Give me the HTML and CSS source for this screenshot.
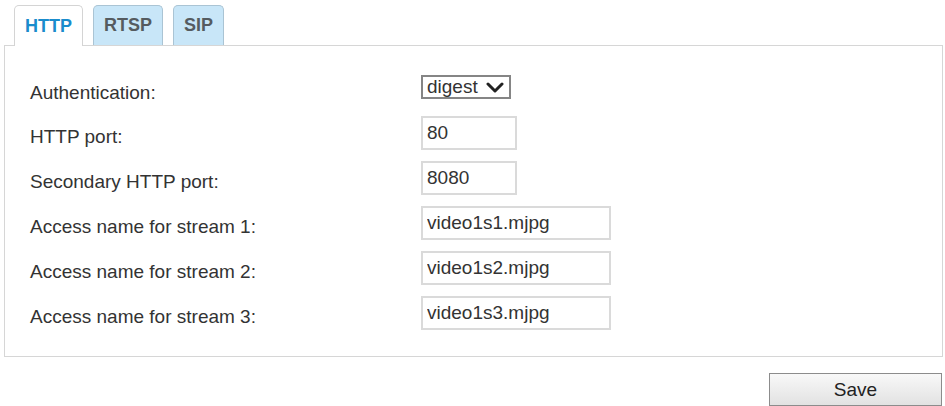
FILE: index.html
```html
<!DOCTYPE html>
<html>
<head>
<meta charset="utf-8">
<link rel="stylesheet" href="styles.css">
</head>
<body>
<div class="page">
  <div class="tabs">
    <div class="tab active">HTTP</div>
    <div class="tab">RTSP</div>
    <div class="tab">SIP</div>
  </div>
  <div class="panel">
    <div class="row row-select">
      <span class="label">Authentication:</span>
      <div class="select"><span>digest</span><svg class="chev" width="18" height="11" viewBox="0 0 18 11"><path d="M2 2 L9 9 L16 2" fill="none" stroke="#222" stroke-width="3" stroke-linecap="round" stroke-linejoin="round"/></svg></div>
    </div>
    <div class="row">
      <span class="label">HTTP port:</span>
      <input class="field short" type="text" value="80">
    </div>
    <div class="row">
      <span class="label">Secondary HTTP port:</span>
      <input class="field short" type="text" value="8080">
    </div>
    <div class="row">
      <span class="label">Access name for stream 1:</span>
      <input class="field long" type="text" value="video1s1.mjpg">
    </div>
    <div class="row">
      <span class="label">Access name for stream 2:</span>
      <input class="field long" type="text" value="video1s2.mjpg">
    </div>
    <div class="row last">
      <span class="label">Access name for stream 3:</span>
      <input class="field long" type="text" value="video1s3.mjpg">
    </div>
  </div>
  <div class="actions">
    <button class="save" type="button">Save</button>
  </div>
</div>
</body>
</html>
```
FILE: styles.css
```css
html, body {
  margin: 0;
  padding: 0;
  background: #ffffff;
}
body {
  font-family: "Liberation Sans", Arial, sans-serif;
  color: #333333;
}
.page {
  padding: 5px 2px 0 4px;
}
.tabs {
  display: flex;
  align-items: flex-start;
  gap: 10px;
  padding-left: 10px;
  margin-bottom: -1px;
  position: relative;
  z-index: 1;
}
.tab {
  box-sizing: border-box;
  height: 40px;
  padding: 0 10px;
  display: flex;
  align-items: center;
  font-weight: bold;
  font-size: 18px;
  color: #555b60;
  background: #c8e6f8;
  border: 1px solid #aac4d4;
  border-bottom: none;
  border-radius: 5px 5px 0 0;
}
.tab.active {
  height: 41px;
  background: #ffffff;
  color: #1a8ccc;
  border-color: #d4d4d4;
}
.panel {
  border: 1px solid #d6d6d6;
  padding: 29px 0 26px 25px;
}
.row {
  display: flex;
  align-items: flex-start;
  height: 34px;
  margin-bottom: 11px;
}
.row.last {
  margin-bottom: 0;
}
.row-select {
  height: 24px;
  margin-bottom: 17px;
}
.label {
  width: 391px;
  flex: none;
  font-size: 19px;
  line-height: 22px;
  margin-top: 10px;
  color: #333333;
}
.row-select .label {
  margin-top: 7px;
}
.select {
  box-sizing: border-box;
  width: 90px;
  height: 24px;
  border: 2px solid #858585;
  display: flex;
  align-items: center;
  justify-content: space-between;
  padding: 0 5px 0 4px;
  font-size: 19px;
  color: #333333;
  background: #ffffff;
}
.chev {
  display: block;
  margin-top: 1px;
}
.field {
  box-sizing: border-box;
  height: 34px;
  border: 2px solid #dadada;
  padding: 0 4px;
  font-family: "Liberation Sans", Arial, sans-serif;
  font-size: 19px;
  color: #333333;
  background: #ffffff;
  outline: none;
  margin: 0;
}
.field.short {
  width: 96px;
}
.field.long {
  width: 190px;
}
.actions {
  display: flex;
  justify-content: flex-end;
  padding-top: 16px;
  padding-right: 1px;
}
.save {
  box-sizing: border-box;
  width: 173px;
  height: 33px;
  border: 1px solid #8c8c8c;
  border-radius: 0;
  background: linear-gradient(#f8f8f8, #e2e2e2);
  font-family: "Liberation Sans", Arial, sans-serif;
  font-size: 19px;
  color: #222222;
  padding: 0;
  margin: 0;
}
```
